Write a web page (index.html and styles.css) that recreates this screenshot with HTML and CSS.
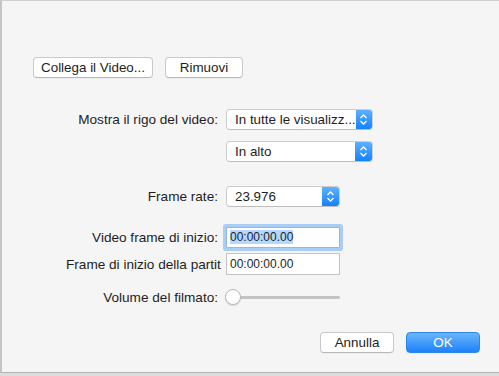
FILE: index.html
```html
<!DOCTYPE html>
<html lang="it">
<head>
    <meta charset="UTF-8">
    <title>Video</title>
    <link rel="stylesheet" href="styles.css">
</head>
<body>
    <div class="window">
        <div class="top-buttons">
            <button class="btn">Collega il Video...</button>
            <button class="btn">Rimuovi</button>
        </div>

        <div class="form">
            <div class="row row-show">
                <span class="label">Mostra il rigo del video:</span>
                <div class="popup popup-wide">
                    <span class="popup-text">In tutte le visualizz...</span>
                    <span class="popup-arrows">
                        <svg width="9" height="13" viewBox="0 0 9 13"><path d="M1.5 5 L4.5 2 L7.5 5 M1.5 8 L4.5 11 L7.5 8" fill="none" stroke="#fff" stroke-width="1.3"/></svg>
                    </span>
                </div>
            </div>

            <div class="row row-pos">
                <span class="label"></span>
                <div class="popup popup-wide">
                    <span class="popup-text">In alto</span>
                    <span class="popup-arrows">
                        <svg width="9" height="13" viewBox="0 0 9 13"><path d="M1.5 5 L4.5 2 L7.5 5 M1.5 8 L4.5 11 L7.5 8" fill="none" stroke="#fff" stroke-width="1.3"/></svg>
                    </span>
                </div>
            </div>

            <div class="row row-rate">
                <span class="label">Frame rate:</span>
                <div class="popup popup-narrow">
                    <span class="popup-text">23.976</span>
                    <span class="popup-arrows">
                        <svg width="9" height="13" viewBox="0 0 9 13"><path d="M1.5 5 L4.5 2 L7.5 5 M1.5 8 L4.5 11 L7.5 8" fill="none" stroke="#fff" stroke-width="1.3"/></svg>
                    </span>
                </div>
            </div>

            <div class="row row-start">
                <span class="label">Video frame di inizio:</span>
                <div class="field focused"><span class="selected">00:00:00.00</span></div>
            </div>

            <div class="row row-score">
                <span class="label">Frame di inizio della partit</span>
                <div class="field">00:00:00.00</div>
            </div>

            <div class="row row-volume">
                <span class="label">Volume del filmato:</span>
                <div class="slider">
                    <div class="knob"></div>
                    <div class="track"></div>
                </div>
            </div>
        </div>

        <div class="bottom-buttons">
            <button class="btn">Annulla</button>
            <button class="btn btn-ok">OK</button>
        </div>
    </div>
</body>
</html>
```

FILE: styles.css
```css
*, *::before, *::after{
    margin: 0;
    padding: 0;
    box-sizing: border-box;
}

body{
    background-color: #dcdcdc;
    font-family: "Liberation Sans", Arial, sans-serif;
    font-size: 13px;
    color: #1e1e1e;
}

.window{
    width: 499px;
    height: 373px;
    background-color: #f5f5f5;
    border-top: 1px solid #cfcfcf;
    border-left: 2px solid #c4c4c4;
    border-bottom: 1px solid #b4b4b4;
    padding: 56px 0 0 31px;
}

.btn{
    font-family: inherit;
    font-size: 13.4px;
    color: #1e1e1e;
    height: 21px;
    background-color: #fff;
    border: 1px solid #c9c9c9;
    border-bottom-color: #b9b9b9;
    border-radius: 4px;
    box-shadow: 0 1px 0 rgba(0,0,0,0.03);
}

.top-buttons{
    display: flex;
    gap: 12px;
}
.top-buttons .btn:first-child{
    width: 120px;
}
.top-buttons .btn:last-child{
    width: 78px;
}

.form{
    margin-top: 31px;
    margin-left: 33px;
}

.row{
    display: flex;
    align-items: center;
    gap: 8px;
}
.label{
    width: 152px;
    font-size: 13.6px;
    text-align: right;
    white-space: nowrap;
}

.row-pos{ margin-top: 11px; }
.row-rate{ margin-top: 24px; }
.row-start{ margin-top: 20px; }
.row-score{ margin-top: 5px; }
.row-volume{ margin-top: 13px; }

.popup{
    height: 21px;
    display: flex;
    background-color: #fff;
    border: 1px solid #cdcdcd;
    border-bottom-color: #bdbdbd;
    border-radius: 4px;
    overflow: hidden;
}
.popup-wide{ width: 147px; }
.popup-narrow{ width: 114px; }
.popup-text{
    flex: 1;
    padding-left: 8px;
    line-height: 19px;
    font-size: 13.4px;
    white-space: nowrap;
}
.popup-arrows{
    width: 17px;
    display: flex;
    align-items: center;
    justify-content: center;
    background: linear-gradient(#5fb0fd, #1581fb);
}

.field{
    width: 114px;
    height: 22px;
    background-color: #fff;
    border: 1px solid #c3c3c3;
    padding-left: 3px;
    line-height: 20px;
    font-size: 12px;
}
.focused{
    height: 21px;
    line-height: 19px;
    border-color: #8eb8ea;
    box-shadow: 0 0 0 3px #a9cdf5;
    border-radius: 1px;
}
.selected{
    background-color: #b3d7ff;
}

.slider{
    position: relative;
    width: 114px;
    height: 18px;
    display: flex;
    align-items: center;
}
.track{
    width: 114px;
    height: 3px;
    border-radius: 2px;
    background-color: #c3c3c3;
}
.knob{
    position: absolute;
    left: -1px;
    top: 1px;
    width: 16px;
    height: 16px;
    border-radius: 50%;
    background-color: #fff;
    border: 1px solid #b9b9b9;
    box-shadow: 0 1px 1px rgba(0,0,0,0.12);
}

.bottom-buttons{
    display: flex;
    justify-content: flex-end;
    gap: 12px;
    margin-top: 26px;
    margin-right: 19px;
}
.bottom-buttons .btn{
    width: 74px;
}
.btn-ok{
    color: #fff;
    background: linear-gradient(#6ab5fb, #1d83f9);
    border-color: #2d86f0;
}
```
